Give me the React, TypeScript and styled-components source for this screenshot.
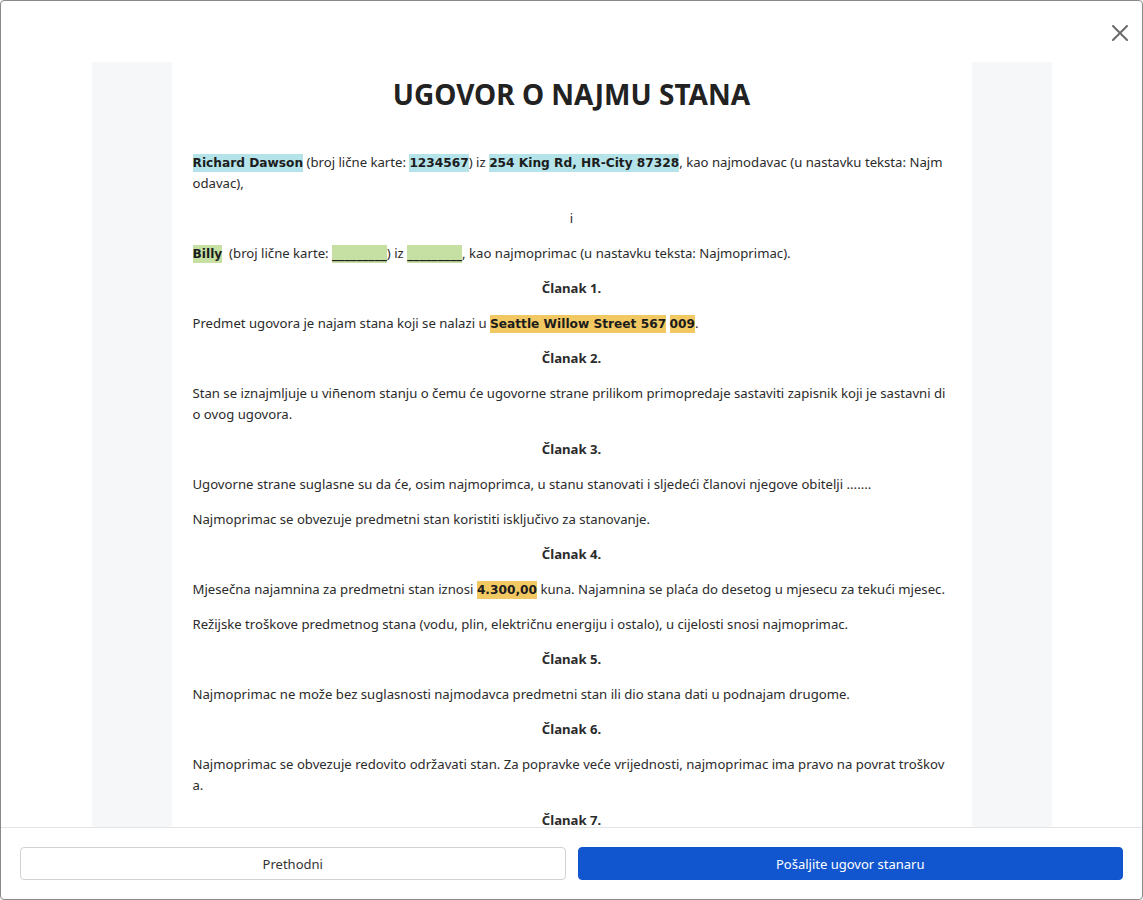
import styled, { createGlobalStyle } from "styled-components";

const GlobalStyle = createGlobalStyle`
  html, body {
    margin: 0;
    padding: 0;
    height: 100%;
    background: #ffffff;
  }
  * { box-sizing: border-box; }
`;

const Modal = styled.div`
  display: flex;
  flex-direction: column;
  width: 100vw;
  height: 100vh;
  border: 1px solid #8a8a8a;
  border-radius: 4px;
  background: #ffffff;
  overflow: hidden;
  font-family: "Noto Sans", "Open Sans", sans-serif;
  color: #2b2b2b;
`;

const Header = styled.div`
  position: relative;
  height: 61px;
  flex-shrink: 0;
`;

const CloseButton = styled.button`
  position: absolute;
  top: 22px;
  right: 12px;
  width: 20px;
  height: 20px;
  padding: 0;
  border: none;
  background: none;
  cursor: pointer;
  display: flex;
  align-items: center;
  justify-content: center;
`;

const ScrollArea = styled.div`
  flex: 1;
  overflow: hidden;
  display: flex;
  justify-content: center;
`;

const PageBackdrop = styled.div`
  width: 960px;
  background: #f6f7f9;
  display: flex;
  justify-content: center;
`;

const Page = styled.div`
  width: 800px;
  background: #ffffff;
  padding: 14px 21px 0;
  font-size: 13.15px;
  line-height: 21px;
`;

const Title = styled.h1`
  margin: 0 0 40px;
  text-align: center;
  font-size: 28px;
  line-height: 36px;
  font-weight: 700;
  color: #222222;
`;

const Para = styled.p<{ $center?: boolean; $bold?: boolean }>`
  margin: 0 0 14px;
  padding-right: ${(p) => (p.$center ? "0" : "4px")};
  text-align: ${(p) => (p.$center ? "center" : "left")};
  font-weight: ${(p) => (p.$bold ? 700 : 400)};
  word-break: break-all;
`;

const colors = {
  blue: "#b4e4ea",
  green: "#c6e0a4",
  yellow: "#f2c862",
};

const Mark = styled.span<{ $tone: keyof typeof colors }>`
  background: ${(p) => colors[p.$tone]};
  font-family: "DejaVu Sans", "Noto Sans", sans-serif;
  font-weight: 700;
  font-size: 12.2px;
  line-height: 1;
  padding: 2px 0;
  color: #1c1c1c;
`;

const Footer = styled.div`
  flex-shrink: 0;
  display: grid;
  grid-template-columns: 1fr 1fr;
  gap: 12px;
  padding: 19px;
  border-top: 1px solid #e2e4e8;
`;

const Button = styled.button<{ $primary?: boolean }>`
  height: 33px;
  border-radius: 4px;
  font-family: "Noto Sans", "Open Sans", sans-serif;
  font-size: 13px;
  cursor: pointer;
  border: 1px solid ${(p) => (p.$primary ? "#1256cf" : "#cfd2d6")};
  background: ${(p) => (p.$primary ? "#1256cf" : "#ffffff")};
  color: ${(p) => (p.$primary ? "#ffffff" : "#333333")};
`;

export default function App() {
  return (
    <>
      <GlobalStyle />
      <Modal>
        <Header>
          <CloseButton aria-label="Zatvori">
            <svg width="16" height="16" viewBox="0 0 16 16">
              <path d="M1 1 L15 15 M15 1 L1 15" stroke="#6b6b6b" strokeWidth="2" strokeLinecap="round" />
            </svg>
          </CloseButton>
        </Header>
        <ScrollArea>
          <PageBackdrop>
            <Page>
              <Title>UGOVOR O NAJMU STANA</Title>
              <Para>
                <Mark $tone="blue">Richard Dawson</Mark> (broj lične karte: <Mark $tone="blue">1234567</Mark>) iz{" "}
                <Mark $tone="blue">254 King Rd, HR-City 87328</Mark>, kao najmodavac (u nastavku teksta: Najmodavac),
              </Para>
              <Para $center>i</Para>
              <Para>
                <Mark $tone="green">Billy</Mark>&nbsp; (broj lične karte: <Mark $tone="green">_________</Mark>) iz{" "}
                <Mark $tone="green">_________</Mark>, kao najmoprimac (u nastavku teksta: Najmoprimac).
              </Para>
              <Para $center $bold>Članak 1.</Para>
              <Para>
                Predmet ugovora je najam stana koji se nalazi u <Mark $tone="yellow">Seattle Willow Street 567</Mark>{" "}
                <Mark $tone="yellow">009</Mark>.
              </Para>
              <Para $center $bold>Članak 2.</Para>
              <Para>
                Stan se iznajmljuje u viñenom stanju o čemu će ugovorne strane prilikom primopredaje sastaviti zapisnik koji je sastavni dio ovog ugovora.
              </Para>
              <Para $center $bold>Članak 3.</Para>
              <Para>
                Ugovorne strane suglasne su da će, osim najmoprimca, u stanu stanovati i sljedeći članovi njegove obitelji .......
              </Para>
              <Para>Najmoprimac se obvezuje predmetni stan koristiti isključivo za stanovanje.</Para>
              <Para $center $bold>Članak 4.</Para>
              <Para>
                Mjesečna najamnina za predmetni stan iznosi <Mark $tone="yellow">4.300,00</Mark> kuna. Najamnina se plaća do desetog u mjesecu za tekući mjesec.
              </Para>
              <Para>
                Režijske troškove predmetnog stana (vodu, plin, električnu energiju i ostalo), u cijelosti snosi najmoprimac.
              </Para>
              <Para $center $bold>Članak 5.</Para>
              <Para>
                Najmoprimac ne može bez suglasnosti najmodavca predmetni stan ili dio stana dati u podnajam drugome.
              </Para>
              <Para $center $bold>Članak 6.</Para>
              <Para>
                Najmoprimac se obvezuje redovito održavati stan. Za popravke veće vrijednosti, najmoprimac ima pravo na povrat troškova.
              </Para>
              <Para $center $bold>Članak 7.</Para>
              <Para>
                Ugovor se sklapa na odreñeno vrijeme, u trajanju od godinu dana.
              </Para>
            </Page>
          </PageBackdrop>
        </ScrollArea>
        <Footer>
          <Button>Prethodni</Button>
          <Button $primary>Pošaljite ugovor stanaru</Button>
        </Footer>
      </Modal>
    </>
  );
}
